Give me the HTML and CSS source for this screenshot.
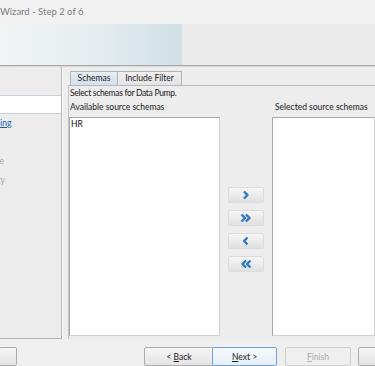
FILE: index.html
```html
<!DOCTYPE html>
<html>
<head>
<meta charset="utf-8">
<link rel="stylesheet" href="styles.css">
</head>
<body>
<div class="window">
  <div class="titlebar">Wizard - Step 2 of 6</div>
  <div class="header">
    <div class="banner"></div>
    <div class="header-rest"></div>
  </div>
  <div class="main">
    <div class="side">
      <ul class="nav">
        <li class="nav-item done">Type</li>
        <li class="nav-item current">Filter</li>
        <li class="nav-item link">Remapping</li>
        <li class="nav-item off">Options</li>
        <li class="nav-item off">Schedule</li>
        <li class="nav-item off">Summary</li>
      </ul>
    </div>
    <div class="content">
      <div class="tabs">
        <div class="tab active">Schemas</div>
        <div class="tab">Include Filter</div>
      </div>
      <div class="tabpanel">
        <div class="desc">Select schemas for Data Pump.</div>
        <div class="shuttle">
          <div class="col col-left">
            <div class="label">Available source schemas</div>
            <div class="list"><div class="list-item">HR</div></div>
          </div>
          <div class="arrows">
            <button class="arrow"><svg width="12" height="10" viewBox="0 0 12 10"><path d="M4 1.5 L7.5 5 L4 8.5" fill="none" stroke="#2f78c8" stroke-width="2.4" stroke-linejoin="round"/></svg></button>
            <button class="arrow"><svg width="14" height="10" viewBox="0 0 14 10"><path d="M2.5 1.5 L6 5 L2.5 8.5 M7 1.5 L10.5 5 L7 8.5" fill="none" stroke="#2f78c8" stroke-width="2.4" stroke-linejoin="round"/></svg></button>
            <button class="arrow"><svg width="12" height="10" viewBox="0 0 12 10"><path d="M7.5 1.5 L4 5 L7.5 8.5" fill="none" stroke="#2f78c8" stroke-width="2.4" stroke-linejoin="round"/></svg></button>
            <button class="arrow"><svg width="14" height="10" viewBox="0 0 14 10"><path d="M7 1.5 L3.5 5 L7 8.5 M11.5 1.5 L8 5 L11.5 8.5" fill="none" stroke="#2f78c8" stroke-width="2.4" stroke-linejoin="round"/></svg></button>
          </div>
          <div class="col col-right">
            <div class="label">Selected source schemas</div>
            <div class="list"></div>
          </div>
        </div>
      </div>
    </div>
  </div>
  <div class="footer">
    <button class="btn btn-help">Help</button>
    <div class="spacer"></div>
    <button class="btn btn-back">&lt; <u>B</u>ack</button>
    <button class="btn btn-next"><u>N</u>ext &gt;</button>
    <button class="btn btn-finish" disabled><u>F</u>inish</button>
    <button class="btn btn-cancel">Cancel</button>
  </div>
</div>
</body>
</html>
```
FILE: styles.css
```css
* { box-sizing: border-box; }
html, body { margin: 0; padding: 0; }
body {
  width: 375px;
  height: 366px;
  overflow: hidden;
  background: #efefef;
  font-family: Lato, "Open Sans", sans-serif;
  font-size: 8.5px;
  color: #1a1a1a;
}
.window { width: 375px; height: 366px; display: flex; flex-direction: column; overflow: hidden; }
.titlebar {
  height: 24px;
  background: #f2f2f2;
  color: #7c7c7c;
  font-size: 9.5px;
  line-height: 24px;
  white-space: nowrap;
}
.header {
  height: 42px;
  display: flex;
  border-bottom: 1px solid #a9a9a9;
  box-shadow: 0 1px 0 #d8d8d8;
}
.banner {
  width: 182px;
  background: linear-gradient(to right, #f1f4f5, #e6edf0 50%, #cfe0e6);
}
.header-rest { flex: 1; background: #ebebeb; }
.main {
  height: 275px;
  margin-top: 1px;
  display: flex;
  background: #ededed;
}
.side {
  width: 62px;
  border-right: 1px solid #b4b4b4;
  border-bottom: 1px solid #b4b4b4;
  box-shadow: 1px 0 0 #fafafa;
  overflow: hidden;
  background: #ececec;
}
.nav {
  list-style: none;
  margin: 0;
  padding: 9px 0 0 0;
}
.nav-item {
  height: 19px;
  line-height: 19px;
  margin-left: -30px;
  white-space: nowrap;
  color: #a9a9a9;
}
.nav-item.done { color: #888; margin-left: -80px; }
.nav-item.current {
  background: #ffffff;
  border-top: 1px solid #c6d2dc;
  border-bottom: 1px solid #c6d2dc;
  margin-left: 0;
  color: transparent;
  height: 19px;
}
.nav-item.link { color: #1b5bb0; text-decoration: underline; }
.content {
  flex: 1;
  padding: 4px 0 0 6px;
  display: flex;
  flex-direction: column;
  overflow: hidden;
}
.tabs { display: flex; height: 14px; padding-left: 2px; }
.tab {
  height: 14px;
  line-height: 13px;
  border: 1px solid #b2b2b2;
  border-bottom: none;
  background: linear-gradient(#f0f0f0, #e4e4e4);
  color: #222;
  margin-right: -1px;
  text-align: center;
  padding: 0;
}
.tab.active {
  background: linear-gradient(#e6edf5, #d3e0ee);
  width: 48px;
}
.tab + .tab { width: 65px; }
.tabpanel {
  flex: 1;
  border-top: 1px solid #b9b9b9;
  border-left: 1px solid #c4c4c4;
  padding: 0 0 0 1px;
  display: flex;
  flex-direction: column;
}
.desc { height: 14px; line-height: 14px; white-space: nowrap; letter-spacing: -0.3px; }
.shuttle { flex: 1; display: flex; padding-bottom: 3px; }
.col { display: flex; flex-direction: column; }
.col-left { width: 150px; }
.col-right { flex: 1; }
.label { height: 17px; line-height: 14px; white-space: nowrap; }
.col-right .label { padding-left: 3px; }
.list {
  flex: 1;
  background: #fff;
  border: 1px solid #a8a8a8;
  border-right-color: #d0d0d0;
  border-bottom-color: #d0d0d0;
}
.col-left .list { margin-left: -1px; }
.list-item { padding: 1px 1px; line-height: 10px; color: #111; }
.arrows {
  width: 52px;
  display: flex;
  flex-direction: column;
  align-items: center;
  padding-top: 87px;
  gap: 7px;
}
.arrow {
  width: 36px;
  height: 16px;
  padding: 0;
  border: 1px solid #dcdcdc;
  border-radius: 2px;
  background: linear-gradient(#f6f6f6, #e0e0e0);
  display: flex;
  align-items: center;
  justify-content: center;
}
.arrow svg { display: block; }
.footer {
  flex: 1;
  display: flex;
  align-items: flex-start;
  padding-top: 8px;
}
.spacer { flex: 1; }
.btn {
  height: 19px;
  font-family: inherit;
  font-size: 8.5px;
  color: #1a1a1a;
  border: 1px solid #acacac;
  border-radius: 2px;
  background: linear-gradient(#f6f6f6, #e3e3e3);
  padding: 0;
  text-align: center;
}
.btn-help { width: 18px; margin-left: -1px; color: transparent; overflow: hidden; }
.btn-back { width: 70px; }
.btn-next {
  width: 65px;
  margin-left: -2px;
  border-color: #6fa3d8;
  background: linear-gradient(#f5f9fc, #e6eef6);
}
.btn-finish {
  width: 66px;
  margin-left: 8px;
  color: #a9a9a9;
  border-color: #cfcfcf;
  background: #efefef;
}
.btn-cancel { width: 30px; margin-left: 7px; margin-right: -13px; color: transparent; }
```
